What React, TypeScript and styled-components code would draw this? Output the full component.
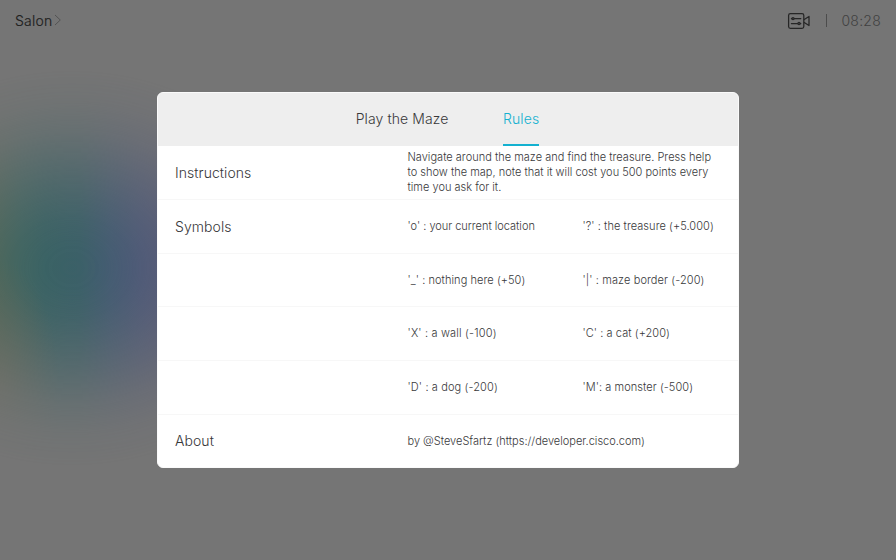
import React from "react";
import styled, { createGlobalStyle } from "styled-components";

const GlobalStyle = createGlobalStyle`
  * { box-sizing: border-box; }
  body { margin: 0; overflow: hidden; }
`;

const Screen = styled.div`
  position: relative;
  width: 896px;
  height: 560px;
  display: flex;
  flex-direction: column;
  overflow: hidden;
  isolation: isolate;
  background: #757575;
  font-family: Inter, "Liberation Sans", sans-serif;
  font-weight: 300;
  color: #38383a;
`;

const Glow = styled.div`
  position: absolute;
  z-index: -1;
  inset: 0 auto 0 0;
  width: 300px;
  background:
    radial-gradient(ellipse 60px 130px at 0 390px, rgba(112, 100, 72, 0.5), transparent),
    linear-gradient(90deg, #426458 0, #3c6460 22px, #396264 45px, #3b6068 80px, #425b72 110px, #485678 140px, #4a5379 160px);
  mask-image: radial-gradient(ellipse 240px 198px at 72px 268px, #000 0%, rgba(0, 0, 0, 0.97) 12%, rgba(0, 0, 0, 0.87) 25%, rgba(0, 0, 0, 0.69) 39%, rgba(0, 0, 0, 0.47) 54%, rgba(0, 0, 0, 0.24) 69%, rgba(0, 0, 0, 0.08) 84%, transparent 100%);
`;

const StatusBar = styled.header`
  height: 41px;
  padding: 0 15px;
  display: flex;
  align-items: center;
  justify-content: space-between;
  color: #202020;
`;

const Room = styled.div`
  display: flex;
  align-items: center;
  gap: 2px;
  padding-bottom: 1px;
  font-size: 14px;
  letter-spacing: 0.22px;
  -webkit-text-stroke: 0.15px currentColor;
`;

const Status = styled.div`
  display: flex;
  align-items: center;
`;

const Divider = styled.span`
  width: 1px;
  height: 13px;
  margin: 0 14px 0 15px;
  background: #4c4c4c;
`;

const Clock = styled.time`
  font-size: 14px;
  color: #414141;
  letter-spacing: 0.25px;
`;

const Panel = styled.main`
  width: 582px;
  height: 376px;
  margin: 51px 0 0 157px;
  display: grid;
  grid-template-rows: 53px 54px 54px 53px 54px 54px 52px;
  overflow: hidden;
  border: 1px solid #fafafa;
  border-radius: 6px;
  background: #ffffff;
`;

const Tabs = styled.nav`
  display: flex;
  justify-content: center;
  gap: 54.5px;
  padding-right: 1px;
  background: #eeeeee;
`;

const Tab = styled.a<{ $active?: boolean }>`
  height: 100%;
  display: flex;
  align-items: center;
  padding-bottom: 3px;
  font-size: 14px;
  letter-spacing: 0.1px;
  color: ${(p) => (p.$active ? "#14b1d0" : "#38383a")};
  box-shadow: ${(p) => (p.$active ? "inset 0 -2px #14b1d0" : "none")};
`;

const Row = styled.section`
  display: grid;
  grid-template-columns: 232.5px 1fr;
  align-items: center;
  padding: 0 17px;
  border-bottom: 1px solid #f7f7f7;
  &:last-child { border-bottom: 0; }
`;

const Label = styled.h2`
  margin: 0;
  font-size: 14px;
  font-weight: 300;
  line-height: 18px;
  letter-spacing: 0.06px;
`;

const Values = styled.div`
  display: grid;
  grid-template-columns: 175px 1fr;
`;

const Value = styled.span<{ $spacing?: number }>`
  font-size: 11px;
  line-height: 15px;
  white-space: nowrap;
  letter-spacing: ${(p) => p.$spacing ?? 0}px;
`;

const Paragraph = styled.p`
  margin: 0;
  font-size: 11px;
  line-height: 15.2px;
  letter-spacing: 0.01px;
  white-space: nowrap;
`;

const symbols = [
  { text: "'o' : your current location", spacing: -0.02 },
  { text: "'?' : the treasure (+5.000)", spacing: 0.06 },
  { text: "'_' : nothing here (+50)", spacing: 0.06 },
  { text: "'|' : maze border (-200)", spacing: 0.1 },
  { text: "'X' : a wall (-100)", spacing: 0.17 },
  { text: "'C' : a cat (+200)", spacing: 0.06 },
  { text: "'D' : a dog (-200)", spacing: 0.12 },
  { text: "'M': a monster (-500)", spacing: 0.06 },
];

const symbolRows = [0, 2, 4, 6].map((start) => symbols.slice(start, start + 2));

const Chevron = () => (
  <svg width="7" height="12" viewBox="0 0 7 12" fill="none" stroke="#535353" strokeWidth="1">
    <path d="M1 1 6.3 6 1 11" />
  </svg>
);

const CameraIcon = () => (
  <svg width="24" height="18" viewBox="0 0 24 18" fill="none" stroke="#262626" strokeWidth="1.25" strokeLinecap="round" strokeLinejoin="round">
    <rect x="1.6" y="1.6" width="15.2" height="14.8" rx="1.8" />
    <path d="M17.2 7.6 22 4.4v9.2L17.2 10.4M4.4 6.6h.5M7.2 6.6h6.6M4.4 11.5h6.2M13.4 11.5h.4" />
    <circle cx="6" cy="6.6" r="1.1" />
    <circle cx="12" cy="11.5" r="1.1" />
  </svg>
);

export default function App() {
  return (
    <>
      <GlobalStyle />
      <Screen>
        <Glow />
        <StatusBar>
          <Room>Salon<Chevron /></Room>
          <Status>
            <CameraIcon />
            <Divider />
            <Clock>08:28</Clock>
          </Status>
        </StatusBar>
        <Panel>
          <Tabs>
            <Tab>Play the Maze</Tab>
            <Tab $active>Rules</Tab>
          </Tabs>
          <Row>
            <Label>Instructions</Label>
            <Paragraph>
              Navigate around the maze and find the treasure. Press help<br />
              to show the map, note that it will cost you 500 points every<br />
              time you ask for it.
            </Paragraph>
          </Row>
          {symbolRows.map((cells, i) => (
            <Row key={cells[0].text}>
              <Label>{i === 0 ? "Symbols" : ""}</Label>
              <Values>
                {cells.map((cell) => (
                  <Value key={cell.text} $spacing={cell.spacing}>{cell.text}</Value>
                ))}
              </Values>
            </Row>
          ))}
          <Row>
            <Label>About</Label>
            <Values>
              <Value>by @SteveSfartz (https://developer.cisco.com)</Value>
            </Values>
          </Row>
        </Panel>
      </Screen>
    </>
  );
}
